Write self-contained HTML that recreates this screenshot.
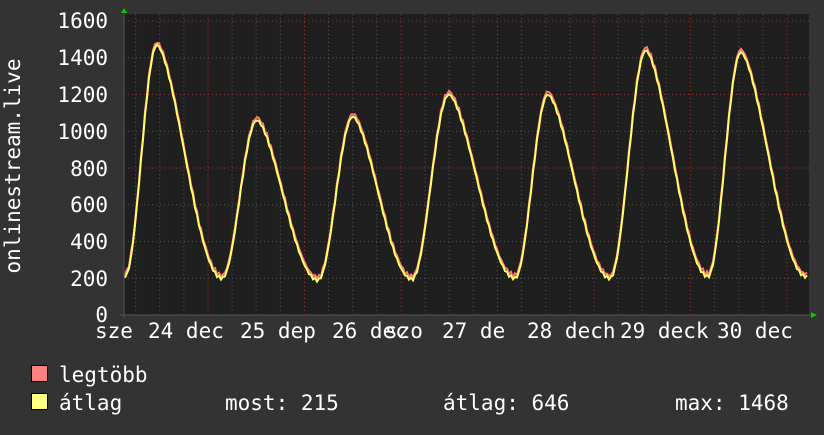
<!DOCTYPE html>
<html><head><meta charset="utf-8"><style>
body{margin:0;width:824px;height:430px;background:#333;overflow:hidden}
svg text{font-family:"DejaVu Sans Mono","Liberation Mono",monospace;font-size:21px;fill:#fff}
</style></head><body>
<svg id="s" width="824" height="430" xmlns="http://www.w3.org/2000/svg">
<rect x="124" y="14" width="685" height="301" fill="#1f1f1f"/>
<g id="grid"></g>
<polyline id="mx" fill="none" stroke="#ff7777" stroke-width="2"/>
<polyline id="av" fill="none" stroke="#ffff66" stroke-width="2"/>
<line x1="124" y1="14" x2="124" y2="318" stroke="#555"/>
<line x1="120" y1="315" x2="812" y2="315" stroke="#555"/>
<polygon points="121,13 127,13 124,8" fill="#0c0"/>
<polygon points="811,312 811,318 817,315" fill="#0c0"/>
<g text-anchor="end">
<text x="108" y="28">1600</text><text x="108" y="65">1400</text><text x="108" y="102">1200</text>
<text x="108" y="139">1000</text><text x="108" y="176">800</text><text x="108" y="212">600</text>
<text x="108" y="249">400</text><text x="108" y="286">200</text><text x="108" y="322">0</text>
</g>
<text x="20" y="166" text-anchor="middle" transform="rotate(-90 20 166)">onlinestream.live</text>
<text x="95" y="338">sze</text><text x="148" y="338">24 dec</text>
<text x="240" y="338">25 dep</text><text x="332" y="338">26 dec</text>
<text x="385" y="338">szo</text><text x="442" y="338">27 de</text>
<text x="527" y="338">28 dech</text><text x="620" y="338">29 deck</text><text x="717" y="338">30 dec</text>
<rect x="31.5" y="365.5" width="16" height="16" fill="#ff8080" stroke="#000"/>
<rect x="31.5" y="393.5" width="16" height="16" fill="#ffff80" stroke="#000"/>
<g style="font-size:21.4px">
<text x="59" y="382">legtöbb</text>
<text x="59" y="410">átlag</text>
<text x="225" y="410">most: 215</text>
<text x="443" y="410">átlag: 646</text>
<text x="675" y="410">max: 1468</text>
</g>
</svg>
<script>
var g=document.getElementById('grid'),h='';
function Y(v){return 315-v*0.18375}
for(var v=200;v<=1600;v+=200){var y=Y(v);h+='<line x1="124" x2="809" y1="'+y+'" y2="'+y+'" stroke="'+(v%400?'#555':'#7a3a3a')+'" stroke-dasharray="1,3"/>';}
for(var d=0;d<8;d++){for(var k=0;k<4;k++){var x=208+(d-1)*96.5+k*24.1;if(x<125||x>808)continue;h+='<line y1="14" y2="315" x1="'+x+'" x2="'+x+'" stroke="'+(k?'#555':'#8a3a3a')+'" stroke-dasharray="1,3"/>';}}
g.innerHTML=h;
var pts=[[125,210],[157,1470],[222,200],[257,1060],[318,190],[353,1080],[412,195],[449,1200],[515,200],[548,1200],[610,200],[646,1440],[708,210],[741,1430],[806,210]];
var a=[],m=[];
for(var x=125;x<=807;x+=2){var i=0;while(i<pts.length-2&&pts[i+1][0]<x)i++;var p=pts[i],q=pts[i+1];var t=(x-p[0])/(q[0]-p[0]);t=Math.max(0,Math.min(1,t));
var s=(1-Math.cos(Math.PI*t))/2;if(q[1]<p[1])s=Math.pow(s,0.8);var v=p[1]+(q[1]-p[1])*s+Math.sin(x*1.7)*8;
a.push(x+','+Y(v).toFixed(1));m.push(x+','+Y(v+8+Math.abs(Math.sin(x*0.9))*12).toFixed(1));}
document.getElementById('mx').setAttribute('points',m.join(' '));
document.getElementById('av').setAttribute('points',a.join(' '));
</script>
</body></html>
